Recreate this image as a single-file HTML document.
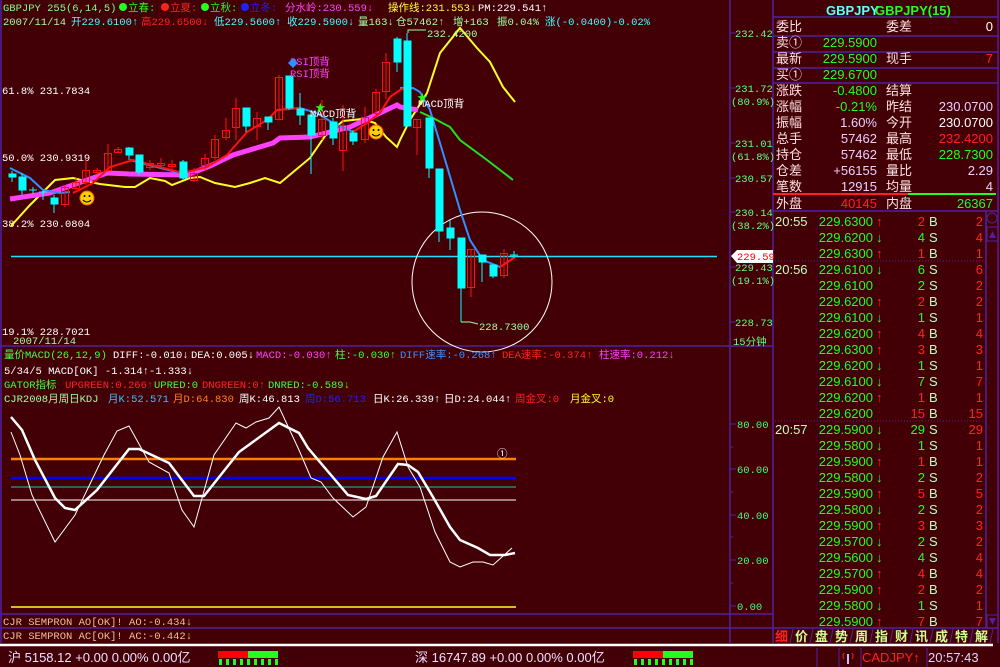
<!DOCTYPE html>
<html><head><meta charset="utf-8"><style>
html,body{margin:0;padding:0;background:#420006;width:1000px;height:667px;overflow:hidden}
svg{display:block}
text{font-family:"Liberation Mono","Noto Sans CJK SC",monospace;font-size:10.5px}
.r text{font-family:"Liberation Sans","Noto Sans CJK SC",sans-serif;font-size:13px}
</style></head><body>
<svg width="1000" height="667" viewBox="0 0 1000 667" xmlns="http://www.w3.org/2000/svg">
<rect width="1000" height="667" fill="#420006"/>
<g stroke="#5020a0" stroke-width="1.5" fill="none">
<line x1="1" y1="0" x2="1" y2="643"/>
<line x1="730" y1="0" x2="730" y2="643"/>
<line x1="773" y1="0" x2="773" y2="643"/>
<line x1="998" y1="0" x2="998" y2="643"/>
<line x1="0" y1="346" x2="773" y2="346"/>
<line x1="0" y1="614" x2="773" y2="614"/>
<line x1="0" y1="628" x2="773" y2="628"/>
<line x1="773" y1="17" x2="998" y2="17"/>
<line x1="773" y1="36" x2="998" y2="36"/>
<line x1="773" y1="52" x2="998" y2="52"/>
<line x1="773" y1="68" x2="998" y2="68"/>
<line x1="773" y1="83" x2="998" y2="83"/>
<line x1="773" y1="211" x2="998" y2="211"/>
<line x1="986" y1="211" x2="986" y2="628"/>
<line x1="773" y1="628" x2="998" y2="628"/>
</g>
<g stroke="#5020a0" stroke-width="1" stroke-dasharray="1,2">
<line x1="775" y1="261" x2="985" y2="261"/><line x1="775" y1="421" x2="985" y2="421"/>
</g>
<line x1="773" y1="194" x2="908" y2="194" stroke="#ff2020" stroke-width="2"/>
<line x1="908" y1="194" x2="996" y2="194" stroke="#20ff20" stroke-width="2"/>
<line x1="0" y1="645" x2="993" y2="645" stroke="#ffffff" stroke-width="2.5"/>

<text x="3" y="11" fill="#80ff80">GBPJPY 255(6,14,5)</text>
<circle cx="123" cy="7" r="4" fill="#20ff20"/><text x="128" y="11" fill="#20ff20">立春:</text>
<circle cx="165" cy="7" r="4" fill="#ff2020"/><text x="170" y="11" fill="#ff2020">立夏:</text>
<circle cx="205" cy="7" r="4" fill="#20ff20"/><text x="210" y="11" fill="#20ff20">立秋:</text>
<circle cx="245" cy="7" r="4" fill="#2020ff"/><text x="250" y="11" fill="#2020ff">立冬:</text>
<text x="285" y="11" fill="#ff40ff">分水岭:230.559↓</text>
<text x="388" y="11" fill="#ffff40">操作线:231.553↓</text>
<text x="478" y="11" fill="#ffffff">PM:229.541↑</text>
<text x="3" y="25" fill="#a0ffa0">2007/11/14</text>
<text x="71" y="25" fill="#40ffff">开229.6100↑</text>
<text x="141" y="25" fill="#ff2020">高229.6500↓</text>
<text x="214" y="25" fill="#40ffff">低229.5600↑</text>
<text x="287" y="25" fill="#40ffff">收229.5900↓</text>
<text x="358" y="25" fill="#a0ffa0">量163↓</text>
<text x="396" y="25" fill="#a0ffa0">仓57462↑</text>
<text x="453" y="25" fill="#a0ffa0">增+163</text>
<text x="497" y="25" fill="#a0ffa0">振0.04%</text>
<text x="545" y="25" fill="#40ffff">涨(-0.0400)-0.02%</text>

<g fill="#ffffff">
<text x="2" y="94">61.8% 231.7834</text>
<text x="2" y="161">50.0% 230.9319</text>
<text x="2" y="227">38.2% 230.0804</text>
<text x="2" y="335">19.1% 228.7021</text>
</g>
<g fill="#60ff80">
<text x="735" y="37">232.42</text>
<text x="735" y="92">231.72</text><text x="731" y="105">(80.9%)</text>
<text x="735" y="147">231.01</text><text x="731" y="160">(61.8%)</text>
<text x="735" y="182">230.57</text>
<text x="735" y="216">230.14</text><text x="731" y="229">(38.2%)</text>
<text x="735" y="271">229.43</text><text x="731" y="284">(19.1%)</text>
<text x="735" y="326">228.73</text>
<text x="733" y="345">15分钟</text>
</g>
<g stroke="#5020a0"><line x1="730" y1="33" x2="736" y2="33"/><line x1="730" y1="88" x2="736" y2="88"/><line x1="730" y1="143" x2="736" y2="143"/><line x1="730" y1="178" x2="736" y2="178"/><line x1="730" y1="212" x2="736" y2="212"/><line x1="730" y1="267" x2="736" y2="267"/><line x1="730" y1="322" x2="736" y2="322"/></g>
<polygon points="731,256 737,250 773,250 773,263 737,263" fill="#ffffff"/>
<text x="737" y="260" fill="#ff0000">229.59</text>

<line x1="11" y1="256.5" x2="717" y2="256.5" stroke="#20e0ff" stroke-width="1.5"/>
<circle cx="482" cy="282" r="70" fill="none" stroke="#ffffff" stroke-width="1"/>

<polyline fill="none" stroke="#ffff20" stroke-width="2" points="11,226 30,205 55,180 73,178 85,181 100,184 125,187 135,187 150,178 165,181 172,185 190,178 200,177 215,183 235,187 250,183 265,178 280,183 310,158 325,136 343,121 362,119 375,123 386,137 397,147 400,140 410,120 427,93 440,53 460,28 477,48 490,62 503,87 515,102"/>
<polyline fill="none" stroke="#20e020" stroke-width="2" points="420,112 433,118 450,127 460,140 487,160 513,180"/>
<polyline fill="none" stroke="#ff40ff" stroke-width="5" points="10,199 50,193 107,173 130,174 187,175 210,166 233,155 273,143 280,138 310,137 330,132 350,127 397,105 400,107 418,110"/>
<polyline fill="none" stroke="#3090ff" stroke-width="2" points="10,168 30,178 43,190 60,193 70,192"/>
<polyline fill="none" stroke="#3090ff" stroke-width="2" points="130,160 180,173"/>
<polyline fill="none" stroke="#3090ff" stroke-width="2" points="277,110 300,108 317,113 333,123 353,132"/>
<polyline fill="none" stroke="#3090ff" stroke-width="2" points="400,88 413,88 420,92 430,110 443,153 460,210 470,240 483,260 500,267 515,257"/>
<polyline fill="none" stroke="#ff1010" stroke-width="2" points="73,193 93,183 110,167 133,160 183,173 207,167 227,155 247,132 267,120 277,110 300,108"/>
<polyline fill="none" stroke="#ff1010" stroke-width="2" points="353,132 367,123 380,113 390,97 400,90 405,88"/>
<polyline fill="none" stroke="#ff1010" stroke-width="2" points="500,267 508,262 515,257"/>

<g stroke-width="1">
<g stroke="#00ffff" fill="#00ffff">
<line x1="12" y1="171" x2="12" y2="182"/><rect x="9" y="174" width="7" height="3"/>
<line x1="22" y1="173" x2="22" y2="195"/><rect x="19" y="177" width="7" height="13"/>
<line x1="33" y1="187" x2="33" y2="194"/><line x1="29" y1="190" x2="37" y2="190"/>
<line x1="43" y1="190" x2="43" y2="200"/><line x1="39" y1="192" x2="47" y2="192"/>
<line x1="54" y1="195" x2="54" y2="213"/><rect x="51" y="198" width="7" height="6"/>
<line x1="129" y1="147" x2="129" y2="160"/><rect x="126" y="148" width="7" height="7"/>
<line x1="139" y1="155" x2="139" y2="175"/><rect x="136" y="155" width="7" height="17"/>
<line x1="183" y1="160" x2="183" y2="180"/><rect x="180" y="162" width="7" height="16"/>
<line x1="246" y1="108" x2="246" y2="132"/><rect x="243" y="108" width="7" height="18"/>
<line x1="268" y1="117" x2="268" y2="130"/><rect x="265" y="117" width="7" height="5"/>
<line x1="289" y1="76" x2="289" y2="110"/><rect x="286" y="76" width="7" height="32"/>
<line x1="300" y1="93" x2="300" y2="125"/><rect x="297" y="109" width="7" height="6"/>
<line x1="311" y1="115" x2="311" y2="174"/><rect x="308" y="115" width="7" height="20"/>
<line x1="333" y1="118" x2="333" y2="145"/><rect x="330" y="122" width="7" height="16"/>
<line x1="353" y1="130" x2="353" y2="145"/><rect x="350" y="133" width="7" height="8"/>
<line x1="397" y1="37" x2="397" y2="72"/><rect x="394" y="39" width="7" height="23"/>
<line x1="407" y1="33" x2="407" y2="126"/><rect x="404" y="41" width="7" height="85"/>
<line x1="429" y1="118" x2="429" y2="178"/><rect x="426" y="118" width="7" height="50"/>
<line x1="439" y1="169" x2="439" y2="242"/><rect x="436" y="169" width="7" height="62"/>
<line x1="450" y1="220" x2="450" y2="250"/><rect x="447" y="228" width="7" height="10"/>
<line x1="461" y1="238" x2="461" y2="322"/><rect x="458" y="238" width="7" height="50"/>
<line x1="482" y1="255" x2="482" y2="282"/><rect x="479" y="255" width="7" height="7"/>
<line x1="493" y1="265" x2="493" y2="278"/><rect x="490" y="265" width="7" height="11"/>
<line x1="514" y1="251" x2="514" y2="258"/><line x1="510" y1="255" x2="518" y2="255"/>
</g>
<g stroke="#ff1010" fill="none">
<line x1="65" y1="185" x2="65" y2="207"/><rect x="61.5" y="187.5" width="7" height="17"/>
<line x1="76" y1="178" x2="76" y2="190"/><rect x="72.5" y="182.5" width="7" height="6"/>
<line x1="86" y1="160" x2="86" y2="185"/><rect x="82.5" y="170.5" width="7" height="12"/>
<line x1="97" y1="168" x2="97" y2="175"/><rect x="93.5" y="170.5" width="7" height="2"/>
<line x1="108" y1="144" x2="108" y2="172"/><rect x="104.5" y="153.5" width="7" height="17"/>
<line x1="118" y1="147" x2="118" y2="153"/><rect x="114.5" y="149.5" width="7" height="3"/>
<line x1="150" y1="160" x2="150" y2="170"/><rect x="146.5" y="163.5" width="7" height="4"/>
<line x1="161" y1="158" x2="161" y2="168"/><rect x="157.5" y="163.5" width="7" height="2"/>
<line x1="172" y1="160" x2="172" y2="170"/><rect x="168.5" y="164.5" width="7" height="2"/>
<line x1="194" y1="168" x2="194" y2="182"/><rect x="190.5" y="173.5" width="7" height="7"/>
<line x1="205" y1="154" x2="205" y2="170"/><rect x="201.5" y="158.5" width="7" height="7"/>
<line x1="215" y1="135" x2="215" y2="160"/><rect x="211.5" y="139.5" width="7" height="18"/>
<line x1="226" y1="118" x2="226" y2="140"/><rect x="222.5" y="130.5" width="7" height="7"/>
<line x1="236" y1="98" x2="236" y2="140"/><rect x="232.5" y="108.5" width="7" height="19"/>
<line x1="257" y1="112" x2="257" y2="140"/><rect x="253.5" y="118.5" width="7" height="8"/>
<line x1="279" y1="75" x2="279" y2="120"/><rect x="275.5" y="77.5" width="7" height="42"/>
<line x1="322" y1="100" x2="322" y2="140"/><rect x="318.5" y="119.5" width="7" height="16"/>
<line x1="343" y1="105" x2="343" y2="171"/><rect x="339.5" y="125.5" width="7" height="25"/>
<line x1="365" y1="107" x2="365" y2="143"/><rect x="361.5" y="117.5" width="7" height="22"/>
<line x1="376" y1="89" x2="376" y2="118"/><rect x="372.5" y="92.5" width="7" height="21"/>
<line x1="386" y1="53" x2="386" y2="99"/><rect x="382.5" y="62.5" width="7" height="29"/>
<line x1="417" y1="119" x2="417" y2="155"/><rect x="413.5" y="119.5" width="7" height="8"/>
<line x1="471" y1="249" x2="471" y2="297"/><rect x="467.5" y="249.5" width="7" height="38"/>
<line x1="504" y1="249" x2="504" y2="278"/><rect x="500.5" y="253.5" width="7" height="22"/>
</g>
</g>
<polyline points="408,33 408,30 414,30 426,30" fill="none" stroke="#a0ffa0"/>
<text x="427" y="37" fill="#a0ffa0">232.4200</text>
<polyline points="461,322 470,322 478,324" fill="none" stroke="#a0ffa0"/>
<text x="479" y="330" fill="#a0ffa0">228.7300</text>
<text x="290" y="65" fill="#ff40ff">RSI顶背</text>
<text x="290" y="77" fill="#ff40ff">RSI顶背</text>
<polygon points="293,58 298,63 293,68 288,63" fill="#3090ff"/>
<text x="315" y="111" fill="#20ff20" font-size="13">★</text>
<text x="310" y="117" fill="#ffffff">MACD顶背</text>
<text x="417" y="101" fill="#20ff20" font-size="13">★</text>
<text x="418" y="107" fill="#ffffff">MACD顶背</text>
<g><circle cx="87" cy="198" r="7" fill="#ffd000" stroke="#ff6000"/><circle cx="84.5" cy="196" r="1" fill="#000"/><circle cx="89.5" cy="196" r="1" fill="#000"/><path d="M83,200 Q87,204 91,200" stroke="#000" fill="none"/></g>
<g><circle cx="376" cy="132" r="7" fill="#ffd000" stroke="#ff6000"/><circle cx="373.5" cy="130" r="1" fill="#000"/><circle cx="378.5" cy="130" r="1" fill="#000"/><path d="M372,134 Q376,138 380,134" stroke="#000" fill="none"/></g>

<text x="13" y="344" fill="#a0ffa0">2007/11/14</text>
<text x="4" y="358" fill="#40ff40">量价MACD(26,12,9)</text>
<text x="113" y="358" fill="#ffffff">DIFF:-0.010↓</text>
<text x="191" y="358" fill="#ffffff">DEA:0.005↓</text>
<text x="256" y="358" fill="#ff40ff">MACD:-0.030↑</text>
<text x="335" y="358" fill="#40ff40">柱:-0.030↑</text>
<text x="400" y="358" fill="#4090ff">DIFF速率:-0.268↑</text>
<text x="502" y="358" fill="#ff2020">DEA速率:-0.374↑</text>
<text x="599" y="358" fill="#ff40ff">柱速率:0.212↓</text>
<text x="4" y="374" fill="#ffffff">5/34/5 MACD[OK] -1.314↑-1.333↓</text>
<text x="4" y="388" fill="#40ff40">GATOR指标</text>
<text x="65" y="388" fill="#ff2020">UPGREEN:0.266↑</text>
<text x="154" y="388" fill="#40ff40">UPRED:0</text>
<text x="202" y="388" fill="#ff2020">DNGREEN:0↑</text>
<text x="268" y="388" fill="#40ff40">DNRED:-0.589↓</text>
<text x="4" y="402" fill="#a0ffa0">CJR2008月周日KDJ</text>
<text x="108" y="402" fill="#40c0ff">月K:52.571</text>
<text x="173" y="402" fill="#ff8020">月D:64.830</text>
<text x="239" y="402" fill="#ffffff">周K:46.813</text>
<text x="305" y="402" fill="#2020ff">周D:56.713</text>
<text x="373" y="402" fill="#ffffff">日K:26.339↑</text>
<text x="444" y="402" fill="#ffffff">日D:24.044↑</text>
<text x="515" y="402" fill="#ff2020">周金叉:0</text>
<text x="570" y="402" fill="#ffff20">月金叉:0</text>

<line x1="11" y1="459" x2="516" y2="459" stroke="#ff8000" stroke-width="2.5"/>
<line x1="11" y1="478" x2="516" y2="478" stroke="#0000ff" stroke-width="2.5"/>
<line x1="11" y1="487" x2="516" y2="487" stroke="#20c0c0" stroke-width="1"/>
<line x1="11" y1="500" x2="516" y2="500" stroke="#ffffff" stroke-width="1"/>
<line x1="11" y1="607" x2="516" y2="607" stroke="#ffff20" stroke-width="1.5"/>
<text x="497" y="457" fill="#ffffff">①</text>
<polyline fill="none" stroke="#ffffff" stroke-width="1" points="11,432 20,455 32,495 55,542 75,515 104,455 117,431 129,426 149,462 169,473 182,510 194,527 214,455 236,423 246,428 256,422 269,418 279,407 299,450 311,478 321,482 333,498 353,517 366,507 383,457 397,432 408,467 420,487 435,532 450,562 460,567 473,562 483,562 493,565 512,548"/>
<polyline fill="none" stroke="#ffffff" stroke-width="2.5" points="11,417 22,430 35,460 55,498 65,508 75,510 97,490 129,449 139,449 169,463 194,496 204,496 239,452 279,423 299,433 308,448 348,495 366,499 376,496 398,464 408,465 418,472 433,497 450,527 460,540 478,548 490,555 505,555 515,553"/>
<g fill="#40ff80">
<text x="737" y="428">80.00</text><text x="737" y="473">60.00</text><text x="737" y="519">40.00</text><text x="737" y="564">20.00</text><text x="737" y="610">0.00</text>
</g>
<g stroke="#5020a0"><line x1="730" y1="424" x2="736" y2="424"/><line x1="730" y1="469" x2="736" y2="469"/><line x1="730" y1="515" x2="736" y2="515"/><line x1="730" y1="560" x2="736" y2="560"/><line x1="730" y1="606" x2="736" y2="606"/><line x1="730" y1="447" x2="733" y2="447"/><line x1="730" y1="492" x2="733" y2="492"/><line x1="730" y1="537" x2="733" y2="537"/><line x1="730" y1="583" x2="733" y2="583"/></g>

<text x="3" y="625" fill="#f0c090">CJR SEMPRON AO[OK]! AO:-0.434↓</text>
<text x="3" y="639" fill="#f0c090">CJR SEMPRON  AC[OK]! AC:-0.442↓</text>

<g class="r">
<text x="826" y="15" fill="#60ffff" font-weight="bold" font-size="12">GBPJPY</text>
<text x="875" y="15" fill="#20ff20" font-weight="bold" font-size="12">GBPJPY(15)</text>
<g fill="#ffe0e0">
<text x="776" y="31">委比</text><text x="886" y="31">委差</text>
<text x="776" y="47">卖①</text>
<text x="776" y="63">最新</text><text x="886" y="63">现手</text>
<text x="776" y="79">买①</text>
<text x="776" y="95">涨跌</text><text x="886" y="95">结算</text>
<text x="776" y="111">涨幅</text><text x="886" y="111">昨结</text>
<text x="776" y="127">振幅</text><text x="886" y="127">今开</text>
<text x="776" y="143">总手</text><text x="886" y="143">最高</text>
<text x="776" y="159">持仓</text><text x="886" y="159">最低</text>
<text x="776" y="175">仓差</text><text x="886" y="175">量比</text>
<text x="776" y="191">笔数</text><text x="886" y="191">均量</text>
<text x="776" y="208">外盘</text><text x="886" y="208">内盘</text>
</g>
<g text-anchor="end">
<text x="877" y="47" fill="#20ff20">229.5900</text>
<text x="877" y="63" fill="#20ff20">229.5900</text>
<text x="877" y="79" fill="#20ff20">229.6700</text>
<text x="877" y="95" fill="#20ff20">-0.4800</text>
<text x="877" y="111" fill="#20ff20">-0.21%</text>
<text x="877" y="127" fill="#e8d0ff">1.60%</text>
<text x="877" y="143" fill="#e8d0ff">57462</text>
<text x="877" y="159" fill="#e8d0ff">57462</text>
<text x="877" y="175" fill="#e8d0ff">+56155</text>
<text x="877" y="191" fill="#e8d0ff">12915</text>
<text x="877" y="208" fill="#ff2020">40145</text>
<text x="993" y="31" fill="#ffffff">0</text>
<text x="993" y="63" fill="#ff2020">7</text>
<text x="993" y="111" fill="#e8d0ff">230.0700</text>
<text x="993" y="127" fill="#ffffff">230.0700</text>
<text x="993" y="143" fill="#ff2020">232.4200</text>
<text x="993" y="159" fill="#20ff20">228.7300</text>
<text x="993" y="175" fill="#e8d0ff">2.29</text>
<text x="993" y="191" fill="#e8d0ff">4</text>
<text x="993" y="208" fill="#20ff20">26367</text>
</g>
</g>

<g class="r">
<text x="775" y="226" fill="#c0ffc0">20:55</text>
<text x="775" y="274" fill="#c0ffc0">20:56</text>
<text x="775" y="434" fill="#c0ffc0">20:57</text>
<g text-anchor="end" fill="#20ff20">
<text x="873" y="226">229.6300</text><text x="873" y="242">229.6200</text><text x="873" y="258">229.6300</text><text x="873" y="274">229.6100</text><text x="873" y="290">229.6100</text><text x="873" y="306">229.6200</text><text x="873" y="322">229.6100</text><text x="873" y="338">229.6200</text><text x="873" y="354">229.6300</text><text x="873" y="370">229.6200</text><text x="873" y="386">229.6100</text><text x="873" y="402">229.6200</text><text x="873" y="418">229.6200</text><text x="873" y="434">229.5900</text><text x="873" y="450">229.5800</text><text x="873" y="466">229.5900</text><text x="873" y="482">229.5800</text><text x="873" y="498">229.5900</text><text x="873" y="514">229.5800</text><text x="873" y="530">229.5900</text><text x="873" y="546">229.5700</text><text x="873" y="562">229.5600</text><text x="873" y="578">229.5700</text><text x="873" y="594">229.5900</text><text x="873" y="610">229.5800</text><text x="873" y="626">229.5900</text>
</g>
<g fill="#ff2020" font-weight="bold"><text x="876" y="226">↑</text><text x="876" y="258">↑</text><text x="876" y="306">↑</text><text x="876" y="338">↑</text><text x="876" y="354">↑</text><text x="876" y="402">↑</text><text x="876" y="466">↑</text><text x="876" y="498">↑</text><text x="876" y="530">↑</text><text x="876" y="578">↑</text><text x="876" y="594">↑</text><text x="876" y="626">↑</text></g>
<g fill="#20ff20" font-weight="bold"><text x="876" y="242">↓</text><text x="876" y="274">↓</text><text x="876" y="322">↓</text><text x="876" y="370">↓</text><text x="876" y="386">↓</text><text x="876" y="434">↓</text><text x="876" y="450">↓</text><text x="876" y="482">↓</text><text x="876" y="514">↓</text><text x="876" y="546">↓</text><text x="876" y="562">↓</text><text x="876" y="610">↓</text></g>
<g text-anchor="end">
<text x="925" y="226" fill="#ff2020">2</text><text x="925" y="242" fill="#20ff20">4</text><text x="925" y="258" fill="#ff2020">1</text><text x="925" y="274" fill="#20ff20">6</text><text x="925" y="290" fill="#20ff20">2</text><text x="925" y="306" fill="#ff2020">2</text><text x="925" y="322" fill="#20ff20">1</text><text x="925" y="338" fill="#ff2020">4</text><text x="925" y="354" fill="#ff2020">3</text><text x="925" y="370" fill="#20ff20">1</text><text x="925" y="386" fill="#20ff20">7</text><text x="925" y="402" fill="#ff2020">1</text><text x="925" y="418" fill="#ff2020">15</text><text x="925" y="434" fill="#20ff20">29</text><text x="925" y="450" fill="#20ff20">1</text><text x="925" y="466" fill="#ff2020">1</text><text x="925" y="482" fill="#20ff20">2</text><text x="925" y="498" fill="#ff2020">5</text><text x="925" y="514" fill="#20ff20">2</text><text x="925" y="530" fill="#ff2020">3</text><text x="925" y="546" fill="#20ff20">2</text><text x="925" y="562" fill="#20ff20">4</text><text x="925" y="578" fill="#ff2020">4</text><text x="925" y="594" fill="#ff2020">2</text><text x="925" y="610" fill="#20ff20">1</text><text x="925" y="626" fill="#ff2020">7</text>
</g>
<g fill="#c0ffc0"><text x="929" y="226">B</text><text x="929" y="242">S</text><text x="929" y="258">B</text><text x="929" y="274">S</text><text x="929" y="290">S</text><text x="929" y="306">B</text><text x="929" y="322">S</text><text x="929" y="338">B</text><text x="929" y="354">B</text><text x="929" y="370">S</text><text x="929" y="386">S</text><text x="929" y="402">B</text><text x="929" y="418">B</text><text x="929" y="434">S</text><text x="929" y="450">S</text><text x="929" y="466">B</text><text x="929" y="482">S</text><text x="929" y="498">B</text><text x="929" y="514">S</text><text x="929" y="530">B</text><text x="929" y="546">S</text><text x="929" y="562">S</text><text x="929" y="578">B</text><text x="929" y="594">B</text><text x="929" y="610">S</text><text x="929" y="626">B</text></g>
<g text-anchor="end" fill="#ff2020">
<text x="983" y="226">2</text><text x="983" y="242">4</text><text x="983" y="258">1</text><text x="983" y="274">6</text><text x="983" y="290">2</text><text x="983" y="306">2</text><text x="983" y="322">1</text><text x="983" y="338">4</text><text x="983" y="354">3</text><text x="983" y="370">1</text><text x="983" y="386">7</text><text x="983" y="402">1</text><text x="983" y="418">15</text><text x="983" y="434">29</text><text x="983" y="450">1</text><text x="983" y="466">1</text><text x="983" y="482">2</text><text x="983" y="498">5</text><text x="983" y="514">2</text><text x="983" y="530">3</text><text x="983" y="546">2</text><text x="983" y="562">4</text><text x="983" y="578">4</text><text x="983" y="594">2</text><text x="983" y="610">1</text><text x="983" y="626">7</text>
</g>
</g>
<circle cx="992" cy="218" r="5" fill="none" stroke="#5020a0"/>
<rect x="987" y="227" width="11" height="14" fill="none" stroke="#5020a0"/>
<polygon points="989,238 992.5,231 996,238" fill="#5020a0"/>
<rect x="987" y="615" width="11" height="13" fill="none" stroke="#5020a0"/>
<polygon points="989,618 992.5,625 996,618" fill="#5020a0"/>

<g stroke="#5020a0"><line x1="793" y1="629" x2="790" y2="643"/><line x1="813" y1="629" x2="810" y2="643"/><line x1="833" y1="629" x2="830" y2="643"/><line x1="853" y1="629" x2="850" y2="643"/><line x1="873" y1="629" x2="870" y2="643"/><line x1="893" y1="629" x2="890" y2="643"/><line x1="913" y1="629" x2="910" y2="643"/><line x1="933" y1="629" x2="930" y2="643"/><line x1="953" y1="629" x2="950" y2="643"/><line x1="973" y1="629" x2="970" y2="643"/><line x1="993" y1="629" x2="990" y2="643"/></g>
<g class="r" font-weight="bold">
<text x="775" y="641" fill="#ff2020">细</text>
<g fill="#d0ff90"><text x="795" y="641">价</text><text x="815" y="641">盘</text><text x="835" y="641">势</text><text x="855" y="641">周</text><text x="875" y="641">指</text><text x="895" y="641">财</text><text x="915" y="641">讯</text><text x="935" y="641">成</text><text x="955" y="641">特</text><text x="975" y="641">解</text></g>
</g>

<g class="r">
<text x="8" y="662" fill="#f0e0ff">沪 5158.12 +0.00 0.00% 0.00亿</text>
<text x="415" y="662" fill="#f0e0ff">深 16747.89 +0.00 0.00% 0.00亿</text>
<text x="862" y="662" fill="#ff2020" font-size="13">CADJPY↑</text>
<text x="928" y="662" fill="#e8d0ff">20:57:43</text>
</g>
<rect x="218" y="651" width="30" height="7" fill="#ff0000"/><rect x="248" y="651" width="30" height="7" fill="#20ff20"/>
<g fill="#20ff20"><rect x="219" y="659" width="3" height="6"/><rect x="226" y="659" width="3" height="6"/><rect x="233" y="659" width="3" height="6"/><rect x="240" y="659" width="3" height="6"/><rect x="247" y="659" width="3" height="6"/><rect x="254" y="659" width="3" height="6"/><rect x="261" y="659" width="3" height="6"/><rect x="268" y="659" width="3" height="6"/><rect x="275" y="659" width="3" height="6"/></g>
<rect x="633" y="651" width="30" height="7" fill="#ff0000"/><rect x="663" y="651" width="30" height="7" fill="#20ff20"/>
<g fill="#20ff20"><rect x="634" y="659" width="3" height="6"/><rect x="641" y="659" width="3" height="6"/><rect x="648" y="659" width="3" height="6"/><rect x="655" y="659" width="3" height="6"/><rect x="662" y="659" width="3" height="6"/><rect x="669" y="659" width="3" height="6"/><rect x="676" y="659" width="3" height="6"/><rect x="683" y="659" width="3" height="6"/><rect x="690" y="659" width="3" height="6"/></g>
<g stroke="#5020a0"><line x1="817" y1="648" x2="817" y2="667"/><line x1="839" y1="648" x2="839" y2="667"/><line x1="861" y1="648" x2="861" y2="667"/><line x1="927" y1="648" x2="927" y2="667"/></g>
<line x1="848" y1="654" x2="848" y2="664" stroke="#c0c0ff" stroke-width="2"/>
<path d="M844,653 Q842,656 844,659 M852,653 Q854,656 852,659" stroke="#ff2020" fill="none"/>
</svg>
</body></html>
